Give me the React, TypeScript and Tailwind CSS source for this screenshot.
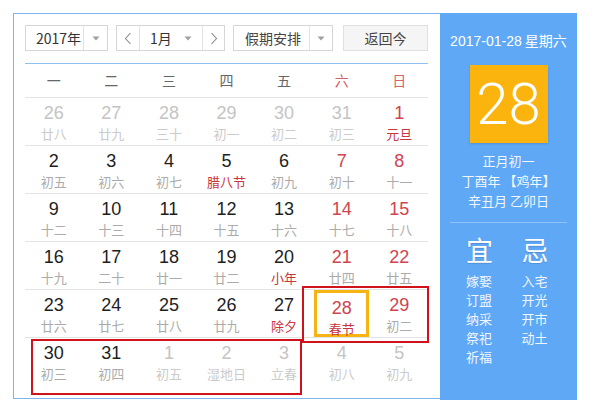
import React from 'react';

type Day = { n: number; l: string; other?: boolean; red?: boolean; fest?: boolean; sel?: boolean };

const weeks: Day[][] = [
  [
    { n: 26, l: '廿八', other: true },
    { n: 27, l: '廿九', other: true },
    { n: 28, l: '三十', other: true },
    { n: 29, l: '初一', other: true },
    { n: 30, l: '初二', other: true },
    { n: 31, l: '初三', other: true },
    { n: 1, l: '元旦', red: true, fest: true },
  ],
  [
    { n: 2, l: '初五' },
    { n: 3, l: '初六' },
    { n: 4, l: '初七' },
    { n: 5, l: '腊八节', fest: true },
    { n: 6, l: '初九' },
    { n: 7, l: '初十', red: true },
    { n: 8, l: '十一', red: true },
  ],
  [
    { n: 9, l: '十二' },
    { n: 10, l: '十三' },
    { n: 11, l: '十四' },
    { n: 12, l: '十五' },
    { n: 13, l: '十六' },
    { n: 14, l: '十七', red: true },
    { n: 15, l: '十八', red: true },
  ],
  [
    { n: 16, l: '十九' },
    { n: 17, l: '二十' },
    { n: 18, l: '廿一' },
    { n: 19, l: '廿二' },
    { n: 20, l: '小年', fest: true },
    { n: 21, l: '廿四', red: true },
    { n: 22, l: '廿五', red: true },
  ],
  [
    { n: 23, l: '廿六' },
    { n: 24, l: '廿七' },
    { n: 25, l: '廿八' },
    { n: 26, l: '廿九' },
    { n: 27, l: '除夕', fest: true },
    { n: 28, l: '春节', red: true, fest: true, sel: true },
    { n: 29, l: '初二', red: true },
  ],
  [
    { n: 30, l: '初三' },
    { n: 31, l: '初四' },
    { n: 1, l: '初五', other: true },
    { n: 2, l: '湿地日', other: true },
    { n: 3, l: '立春', other: true },
    { n: 4, l: '初八', other: true },
    { n: 5, l: '初九', other: true },
  ],
];

const weekdays = ['一', '二', '三', '四', '五', '六', '日'];
const yi = ['嫁娶', '订盟', '纳采', '祭祀', '祈福'];
const ji = ['入宅', '开光', '开市', '动土'];

const cjk = "font-['Noto_Sans_CJK_SC',sans-serif]";

function Caret() {
  return (
    <svg width="8" height="5" viewBox="0 0 8 5" className="shrink-0">
      <path d="M0.5 0.5h7L4 4.5z" fill="#a0a0a0" />
    </svg>
  );
}

function Chevron({ dir }: { dir: 'l' | 'r' }) {
  return (
    <svg width="8" height="13" viewBox="0 0 8 13">
      <path d={dir === 'l' ? 'M6.5 1L1.5 6.5L6.5 12' : 'M1.5 1L6.5 6.5L1.5 12'} stroke="#888" strokeWidth="1.1" fill="none" />
    </svg>
  );
}

function DayCell({ d }: { d: Day }) {
  const numColor = d.other ? 'text-[#c4c4c4]' : d.red ? 'text-[#cf4450]' : 'text-[#1e1e1e]';
  const lunarColor = d.other ? 'text-[#cbcbcb]' : d.fest ? 'text-[#c9353f]' : 'text-[#ababab]';
  return (
    <div className="flex-1 flex justify-center">
      <div
        className={`flex flex-col items-center w-full h-[47px] pt-[5px] ${
          d.sel ? 'border-[3px] border-[#f5b414] pt-[2px] mx-[1px]' : ''
        }`}
      >
        <span className={`font-['Liberation_Sans',sans-serif] text-[18px] leading-[21px] ${numColor}`}>{d.n}</span>
        <span className={`${cjk} text-[13px] leading-[18px] mt-[1px] ${lunarColor}`}>{d.l}</span>
      </div>
    </div>
  );
}

function Column({ title, items }: { title: string; items: string[] }) {
  return (
    <div className="w-[58px] flex flex-col">
      <div className="text-[27px] leading-[30px] [text-shadow:0_1px_1px_rgba(0,0,0,0.15)]">{title}</div>
      <div className="mt-[6px] flex flex-col text-[13px] leading-[19px] text-[#f0f6ff]">
        {items.map((t) => (
          <span key={t}>{t}</span>
        ))}
      </div>
    </div>
  );
}

export default function App() {
  return (
    <div className="relative w-[600px] h-[407px] bg-white p-[13px]">
      <div className="flex h-[387px] w-[564px]">
        {/* calendar */}
        <div className="w-[427px] h-[386px] border-l border-t border-b border-[#7fb5ee] pl-[11px] pr-[12px] pt-[11px]">
          <div className={`flex h-[26px] text-[14px] text-[#333] ${cjk}`}>
            <div className="flex w-[83px] border border-[#d6d6d6]">
              <div className="w-[57px] flex items-center pl-[10px]">2017年</div>
              <div className="flex-1 border-l border-[#e2e2e2] flex items-center justify-center">
                <Caret />
              </div>
            </div>
            <div className="flex w-[109px] ml-[8px] border border-[#d6d6d6]">
              <div className="w-[23px] flex items-center justify-center border-r border-[#e2e2e2]">
                <Chevron dir="l" />
              </div>
              <div className="w-[63px] flex items-center justify-between pl-[10px] pr-[10px] border-r border-[#e2e2e2]">
                <span>1月</span>
                <Caret />
              </div>
              <div className="flex-1 flex items-center justify-center">
                <Chevron dir="r" />
              </div>
            </div>
            <div className="flex w-[100px] ml-[8px] border border-[#d6d6d6]">
              <div className="w-[75px] flex items-center pl-[11px] text-[#444]">假期安排</div>
              <div className="flex-1 border-l border-[#e2e2e2] flex items-center justify-center">
                <Caret />
              </div>
            </div>
            <div className="w-[85px] ml-[10px] border border-[#e0e0e0] bg-[#f5f5f5] flex items-center justify-center text-[#444]">
              返回今
            </div>
          </div>
          <div className="mt-[12px] h-px bg-[#8fc0f0]" />
          <div className={`flex h-[34px] items-center border-b border-[#e4e4e4] ${cjk} text-[14px]`}>
            {weekdays.map((w, i) => (
              <div key={w} className={`flex-1 text-center ${i >= 5 ? 'text-[#d5616a]' : 'text-[#666]'}`}>
                {w}
              </div>
            ))}
          </div>
          {weeks.map((wk, i) => (
            <div key={i} className={`flex h-[48px] ${i < 5 ? 'border-b border-[#e4e4e4]' : ''}`}>
              {wk.map((d, j) => (
                <DayCell key={j} d={d} />
              ))}
            </div>
          ))}
        </div>

        {/* side panel */}
        <div className={`w-[137px] h-[387px] bg-[#5fa8f6] flex flex-col items-center text-white ${cjk}`}>
          <div className="mt-[17px] text-[14px] leading-[20px]">
            <span className="font-['Liberation_Sans',sans-serif]">2017-01-28</span> 星期六
          </div>
          <div className="mt-[14px] w-[78px] h-[78px] bg-[#fbb40d] flex items-center justify-center shadow-[0_1px_2px_rgba(0,0,0,0.15)]">
            <span className="font-['Roboto',sans-serif] font-light text-[58px] leading-none">28</span>
          </div>
          <div className="mt-[8px] text-[13px] leading-[20px] text-center text-[#f2f7ff]">
            <div>正月初一</div>
            <div>丁酉年 【鸡年】</div>
            <div>辛丑月 乙卯日</div>
          </div>
          <div className="mt-[11px] w-[117px] h-px bg-[#8ec1f8]" />
          <div className="flex w-full pl-[26px] mt-[12px]">
            <Column title="宜" items={yi} />
            <Column title="忌" items={ji} />
          </div>
        </div>
      </div>

      {/* annotation boxes */}
      <div className="absolute left-[302px] top-[286px] w-[127px] h-[57px] border-2 border-[#d0121b]" />
      <div className="absolute left-[31px] top-[339px] w-[271px] h-[56px] border-2 border-[#d0121b]" />
    </div>
  );
}
